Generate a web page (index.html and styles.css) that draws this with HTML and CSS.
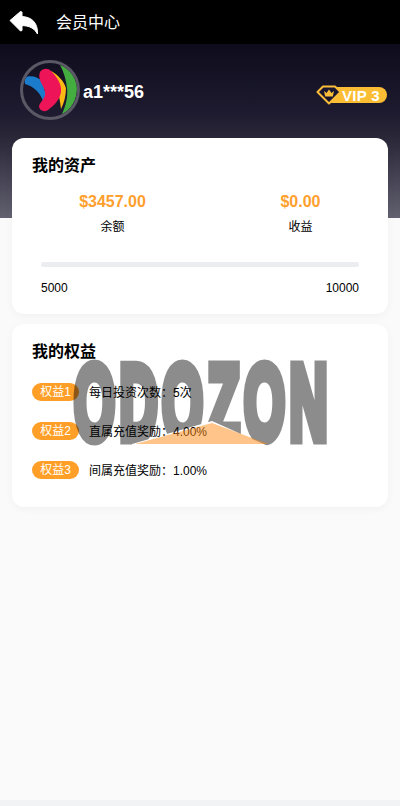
FILE: index.html
```html
<!DOCTYPE html>
<html lang="zh">
<head>
<meta charset="utf-8">
<title>会员中心</title>
<link rel="stylesheet" href="styles.css">
</head>
<body>
<div class="page">
  <header class="topbar">
    <svg class="back" width="30" height="24" viewBox="0 0 30 24"><path d="M1 9.500 11.500 0.500 13 1V5.500C23 6 29 12 28.500 23 27 21.500 25.500 15 13 14.500V19.500L11.500 20Z" fill="#fff" stroke="#fff" stroke-linejoin="round"/></svg>
    <span class="topbar-title">会员中心</span>
  </header>
  <section class="hero">
    <div class="avatar">
      <svg width="54" height="54" viewBox="0 0 54 54">
        <path d="M1 15C6 12 14 13 19 18L24 36 20 38C17 29 10 23 2 21Z" fill="#1a7ccb"/>
        <path d="M28 8C35 12 41 18 43 25 43 33 41 40 38 46 37 38 36 30 32 22Z" fill="#fdb913"/>
        <path d="M37 2C47 5 54 14 54 25 54 37 48 47 39 51 43 42 45 34 44 25 43 17 41 9 37 2Z" fill="#44ad3f"/>
        <path d="M17 9C20 5 25 5 28 8 34 14 39 21 38 29 37 36 32 42 25 47 21 50 16 47 16 43 17 39 23 35 22 29 21 22 14 17 17 9Z" fill="#ed1558"/>
      </svg>
    </div>
    <span class="username">a1***56</span>
    <div class="vip">
      <svg class="vip-gem" width="26" height="20" viewBox="0 0 26 20"><path d="M1.500 7 7 1.500H19L24.500 7 13 18.500Z" fill="#1a1630" stroke="#f9bd3a" stroke-width="2" stroke-linejoin="round"/><path d="M8 6 10.500 8 13 4.500 15.500 8 18 6 16.800 11.500H9.200Z" fill="#f9bd3a"/></svg>
      <span class="vip-text">VIP 3</span>
    </div>
  </section>
  <main class="cards">
    <section class="card assets">
      <h2 class="card-title">我的资产</h2>
      <div class="stats">
        <div class="stat"><div class="stat-value">$3457.00</div><div class="stat-label">余额</div></div>
        <div class="stat"><div class="stat-value">$0.00</div><div class="stat-label">收益</div></div>
      </div>
      <div class="progress"></div>
      <div class="range"><span>5000</span><span>10000</span></div>
    </section>
    <section class="card rights">
      <h2 class="card-title">我的权益</h2>
      <ul class="right-list">
        <li class="right-row"><span class="pill">权益1</span><span>每日投资次数：5次</span></li>
        <li class="right-row"><span class="pill">权益2</span><span>直属充值奖励：4.00%</span></li>
        <li class="right-row"><span class="pill">权益3</span><span>间属充值奖励：1.00%</span></li>
      </ul>
    </section>
  </main>
  <div class="watermark">
    <div class="wm-letters"><span class="wm-text">ODOZON</span></div>
    <svg class="wm-swoosh" width="133" height="22" viewBox="0 0 133 22"><path d="M0 21 77 0 133 21Z" fill="#ff8a14" fill-opacity=".5"/></svg>
  </div>
</div>
</body>
</html>
```
FILE: styles.css
```css
* { box-sizing: border-box; }
html, body { margin: 0; padding: 0; }
body {
  background: #f2f3f5;
  height: 806px;
  overflow: hidden;
  font-family: "Liberation Sans", "Noto Sans CJK SC", sans-serif;
  color: #000;
}
.page { position: relative; height: 800px; background: #fafafa; }
.topbar {
  height: 44px;
  background: #000;
  display: flex;
  align-items: center;
  padding-left: 9px;
  color: #fff;
}
.back { flex: none; margin-top: 2px; }
.topbar-title { margin: -3px 0 0 17px; font-size: 16px; }
.hero {
  height: 174px;
  background: linear-gradient(180deg, #0e0c1c 0%, #1e1b30 40%, #2b2839 55%, #62616f 100%);
  display: flex;
  align-items: flex-start;
  padding: 16px 13px 0 20px;
}
.avatar {
  width: 60px;
  height: 60px;
  border: 3px solid #595864;
  border-radius: 50%;
  flex: none;
  overflow: hidden;
  display: flex;
  align-items: center;
  justify-content: center;
}
.username {
  margin: 21px 0 0 3px;
  font-size: 18px;
  line-height: 22px;
  font-weight: 700;
  color: #fff;
}
.vip {
  margin: 25px 0 0 auto;
  width: 71px;
  height: 20px;
  display: flex;
  align-items: center;
  position: relative;
}
.vip::before {
  content: "";
  position: absolute;
  left: 12px;
  right: 0;
  top: 2px;
  bottom: 2px;
  background: #fbbd34;
  border-radius: 0 9px 9px 0;
}
.vip-gem { position: relative; flex: none; }
.vip-text {
  position: relative;
  font-size: 15px;
  font-weight: 700;
  letter-spacing: .3px;
  color: #fff;
  white-space: nowrap;
}
.cards {
  margin-top: -80px;
  padding: 0 12px;
  display: flex;
  flex-direction: column;
  gap: 10px;
  position: relative;
}
.card {
  background: #fff;
  border-radius: 12px;
  box-shadow: 0 2px 8px rgba(0, 0, 0, .04);
  padding: 16px 20px;
}
.assets { height: 176px; }
.rights { height: 183px; }
.card-title {
  margin: 0;
  font-size: 16px;
  line-height: 24px;
  font-weight: 700;
}
.stats {
  display: grid;
  grid-template-columns: 161px 175px;
  gap: 20px;
  margin: 12px -20px 0 0;
}
.stat { text-align: center; }
.stat-value {
  color: #ff9f2e;
  font-size: 16px;
  line-height: 24px;
  font-weight: 700;
}
.stat-label { margin-top: 4px; font-size: 12px; line-height: 18px; }
.progress {
  margin: 26px 9px 0;
  height: 5px;
  background: #ebedf0;
  border-radius: 3px;
}
.range {
  margin: 13px 9px 0;
  display: flex;
  justify-content: space-between;
  font-size: 12px;
  line-height: 16px;
}
.right-list {
  list-style: none;
  margin: 18px 0 0;
  padding: 0;
  display: flex;
  flex-direction: column;
  gap: 20px;
}
.right-row {
  display: flex;
  align-items: center;
  height: 19px;
  font-size: 12px;
}
.pill {
  width: 47px;
  height: 18px;
  margin-right: 10px;
  border-radius: 9px;
  background: #ff9f28;
  color: #fff;
  text-align: center;
  line-height: 18px;
  flex: none;
}
.watermark {
  position: absolute;
  left: 72px;
  top: 358px;
  width: 257px;
  height: 88px;
  pointer-events: none;
}
.wm-letters {
  position: absolute;
  inset: 0;
  opacity: .45;
  clip-path: polygon(0 0, 100% 0, 100% 100%, 196px 100%, 140px 63px, 60px 86px, 60px 100%, 0 100%);
}
.wm-text {
  position: absolute;
  left: 2px;
  top: 0;
  font-size: 106px;
  line-height: 88px;
  font-weight: 700;
  letter-spacing: 9px;
  color: #000;
  -webkit-text-stroke: 11px #000;
  transform: scaleX(.497);
  transform-origin: 0 0;
  white-space: nowrap;
}
.wm-swoosh { position: absolute; left: 63px; top: 65px; }
```
